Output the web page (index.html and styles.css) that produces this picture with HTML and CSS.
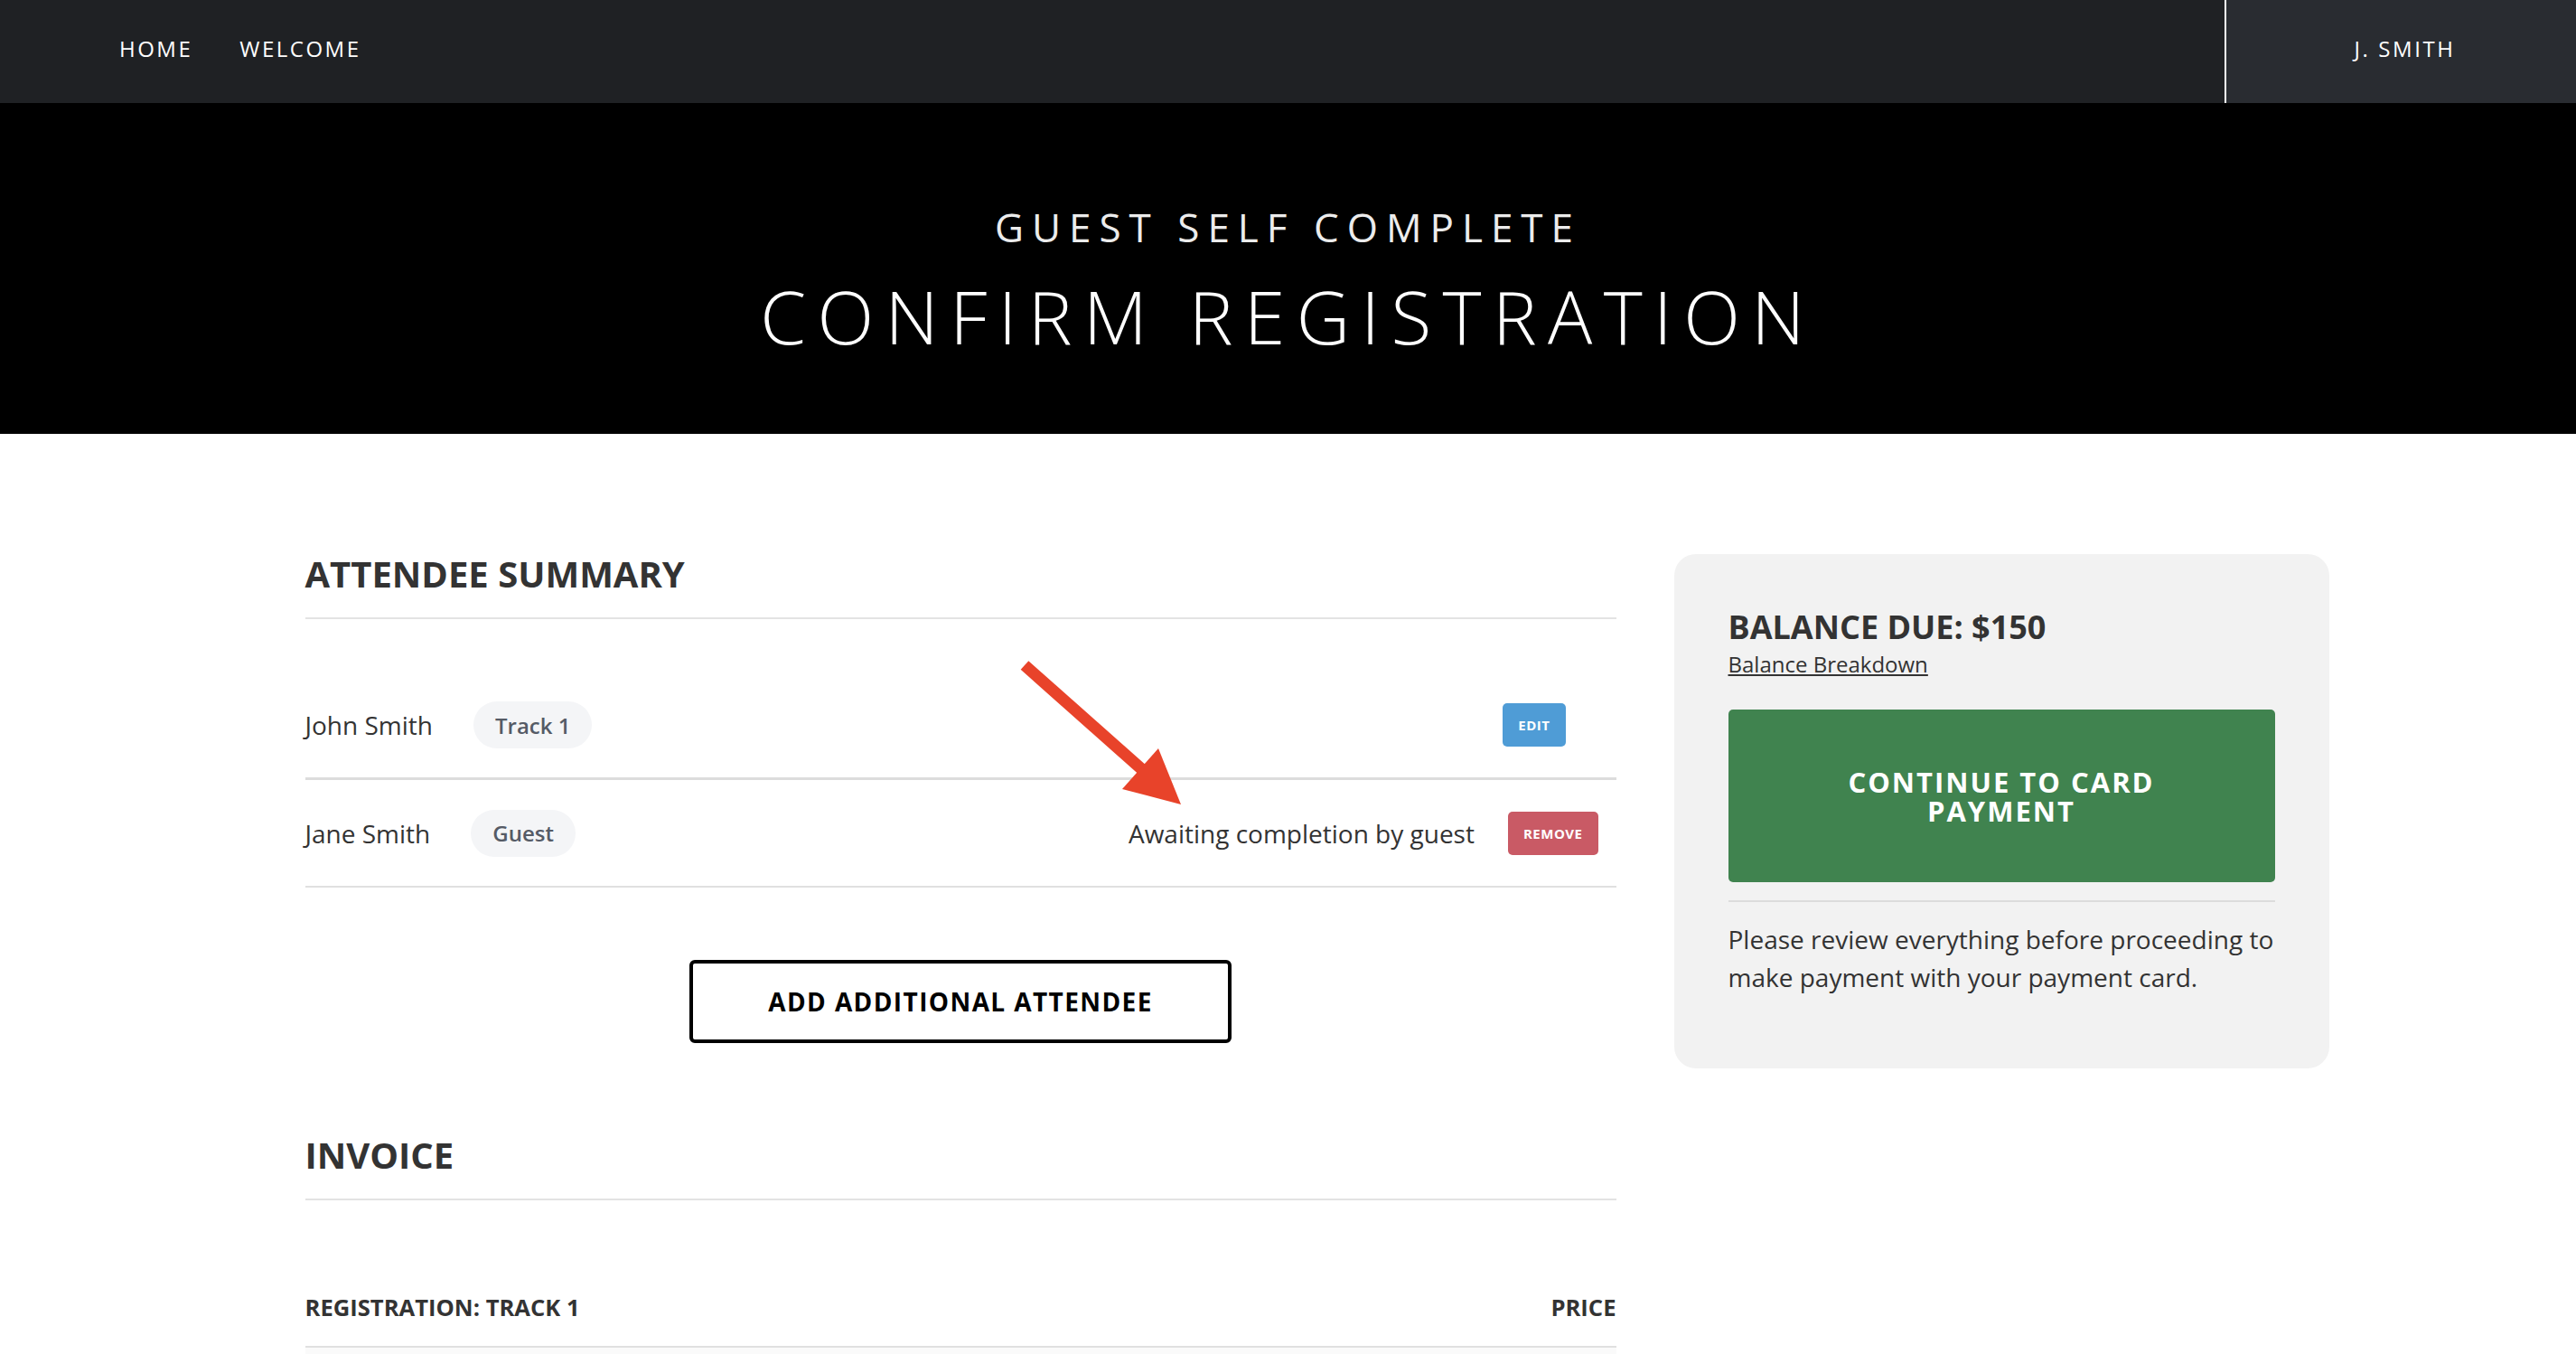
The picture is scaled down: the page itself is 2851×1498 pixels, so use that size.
FILE: index.html
```html
<!DOCTYPE html>
<html lang="en">
<head>
<meta charset="utf-8">
<title>Confirm Registration</title>
<link rel="stylesheet" href="styles.css">
</head>
<body>
<header class="topnav">
  <nav class="nav-links">
    <a class="nav-link" href="#">HOME</a>
    <a class="nav-link" href="#">WELCOME</a>
  </nav>
  <div class="user">J. SMITH</div>
</header>

<section class="hero">
  <p class="hero-sub">GUEST SELF COMPLETE</p>
  <h1 class="hero-title">CONFIRM REGISTRATION</h1>
</section>

<main class="layout">
  <div class="primary">
    <h2 class="section-title">ATTENDEE SUMMARY</h2>
    <ul class="attendees">
      <li class="attendee attendee-first">
        <span class="name">John Smith</span>
        <span class="pill">Track 1</span>
        <button class="btn-small btn-edit">EDIT</button>
      </li>
      <li class="attendee">
        <span class="name">Jane Smith</span>
        <span class="pill">Guest</span>
        <span class="status">Awaiting completion by guest</span>
        <button class="btn-small btn-remove">REMOVE</button>
      </li>
    </ul>
    <div class="add-wrap">
      <button class="btn-outline">ADD ADDITIONAL ATTENDEE</button>
    </div>

    <h2 class="section-title invoice-title">INVOICE</h2>
    <div class="invoice-head">
      <span>REGISTRATION: TRACK 1</span>
      <span>PRICE</span>
    </div>
    <div class="invoice-row"></div>
  </div>

  <aside class="summary-card">
    <h3 class="balance">BALANCE DUE: $150</h3>
    <a class="breakdown" href="#">Balance Breakdown</a>
    <button class="pay-btn">CONTINUE TO CARD PAYMENT</button>
    <p class="card-note">Please review everything before proceeding to make payment with your payment card.</p>
  </aside>
</main>

<svg class="annotation" width="2851" height="1498" viewBox="0 0 2851 1498" aria-hidden="true">
  <line x1="1134" y1="736" x2="1268" y2="855" stroke="#e8432a" stroke-width="13"/>
  <polygon points="1307,890 1242,873 1282,828" fill="#e8432a"/>
</svg>
</body>
</html>
```

FILE: styles.css
```css
* { box-sizing: border-box; }

body {
  margin: 0;
  font-family: "Open Sans", "Liberation Sans", sans-serif;
  color: #333;
  background: #fff;
  position: relative;
}

/* top navigation */
.topnav {
  display: flex;
  justify-content: space-between;
  height: 114px;
  background: #1f2124;
}
.nav-links {
  display: flex;
  align-items: center;
  gap: 52px;
  padding-left: 132px;
  padding-bottom: 7px;
}
.nav-link {
  color: #fff;
  font-size: 24px;
  letter-spacing: 2.5px;
  text-decoration: none;
}
.user {
  width: 389px;
  border-left: 2px solid #fff;
  background: #292c31;
  display: flex;
  align-items: center;
  justify-content: center;
  padding-left: 8px;
  padding-bottom: 7px;
  color: #fff;
  font-size: 24px;
  letter-spacing: 2.6px;
}

/* hero */
.hero {
  background: #000;
  height: 366px;
  padding-top: 111px;
  text-align: center;
}
.hero-sub {
  margin: 0;
  font-size: 44px;
  line-height: 53px;
  letter-spacing: 9px;
  color: #ececec;
  font-weight: 400;
}
.hero-title {
  margin: 22px 0 0;
  font-size: 82px;
  line-height: 98px;
  font-weight: 300;
  letter-spacing: 12.4px;
  color: #fff;
}

/* layout */
.layout {
  display: grid;
  grid-template-columns: 1451px 725px;
  column-gap: 64px;
  max-width: 2304px;
  margin: 0 auto;
  padding: 131px 0 0 64px;
  align-items: start;
}

.section-title {
  margin: 0;
  font-size: 40px;
  line-height: 48px;
  font-weight: 700;
  padding-bottom: 24px;
  border-bottom: 2px solid #e3e3e3;
}

.attendees {
  list-style: none;
  margin: 59px 0 0;
  padding: 0;
}
.attendee {
  display: flex;
  align-items: center;
  height: 119px;
  border-bottom: 2px solid #e0e0e0;
}
.attendee-first {
  border-bottom: 3px solid #dcdcdc;
}
.name {
  font-size: 28px;
}
.pill {
  margin-left: 45px;
  height: 52px;
  padding: 0 24px;
  border-radius: 26px;
  background: #f4f5f7;
  color: #555b66;
  font-size: 24px;
  font-weight: 600;
  display: flex;
  align-items: center;
}
.status {
  margin-left: auto;
  font-size: 28px;
}
.btn-small {
  height: 48px;
  padding: 0 17px;
  border: 0;
  border-radius: 5px;
  color: #fff;
  font-family: inherit;
  font-size: 15px;
  font-weight: 700;
  letter-spacing: 0.5px;
}
.btn-edit {
  margin-left: auto;
  margin-right: 56px;
  background: #4f9cd6;
}
.btn-remove {
  margin-left: 37px;
  margin-right: 20px;
  background: #c95a65;
}

.add-wrap {
  display: flex;
  justify-content: center;
  margin-top: 80px;
}
.btn-outline {
  width: 600px;
  height: 92px;
  border: 4px solid #000;
  border-radius: 6px;
  background: #fff;
  color: #000;
  font-family: inherit;
  font-size: 28px;
  font-weight: 700;
  letter-spacing: 1.4px;
}

.invoice-title {
  margin-top: 100px;
}
.invoice-head {
  display: flex;
  justify-content: space-between;
  padding: 101px 0 25px;
  font-size: 25.6px;
  line-height: 35px;
  font-weight: 700;
  border-bottom: 2px solid #e0e0e0;
}
.invoice-row {
  height: 60px;
  background: #fafafa;
}

/* summary card */
.summary-card {
  background: #f2f2f2;
  border-radius: 24px;
  padding: 61px 60px 80px;
  margin-top: 2px;
}
.balance {
  margin: 0;
  font-size: 36px;
  line-height: 40px;
  font-weight: 700;
}
.breakdown {
  display: block;
  margin-top: 5px;
  font-size: 24px;
  line-height: 32px;
  color: #333;
  text-decoration: underline;
}
.pay-btn {
  display: block;
  width: 100%;
  height: 191px;
  margin-top: 34px;
  padding: 0 60px;
  background: #40834f;
  border: 0;
  border-radius: 5px;
  color: #fff;
  font-family: inherit;
  font-size: 31px;
  line-height: 32px;
  font-weight: 700;
  letter-spacing: 2px;
}
.card-note {
  margin: 20px 0 0;
  padding-top: 20px;
  border-top: 2px solid #dcdcdc;
  font-size: 28px;
  line-height: 42px;
}

/* annotation overlay */
.annotation {
  position: absolute;
  left: 0;
  top: 0;
  pointer-events: none;
}
```
